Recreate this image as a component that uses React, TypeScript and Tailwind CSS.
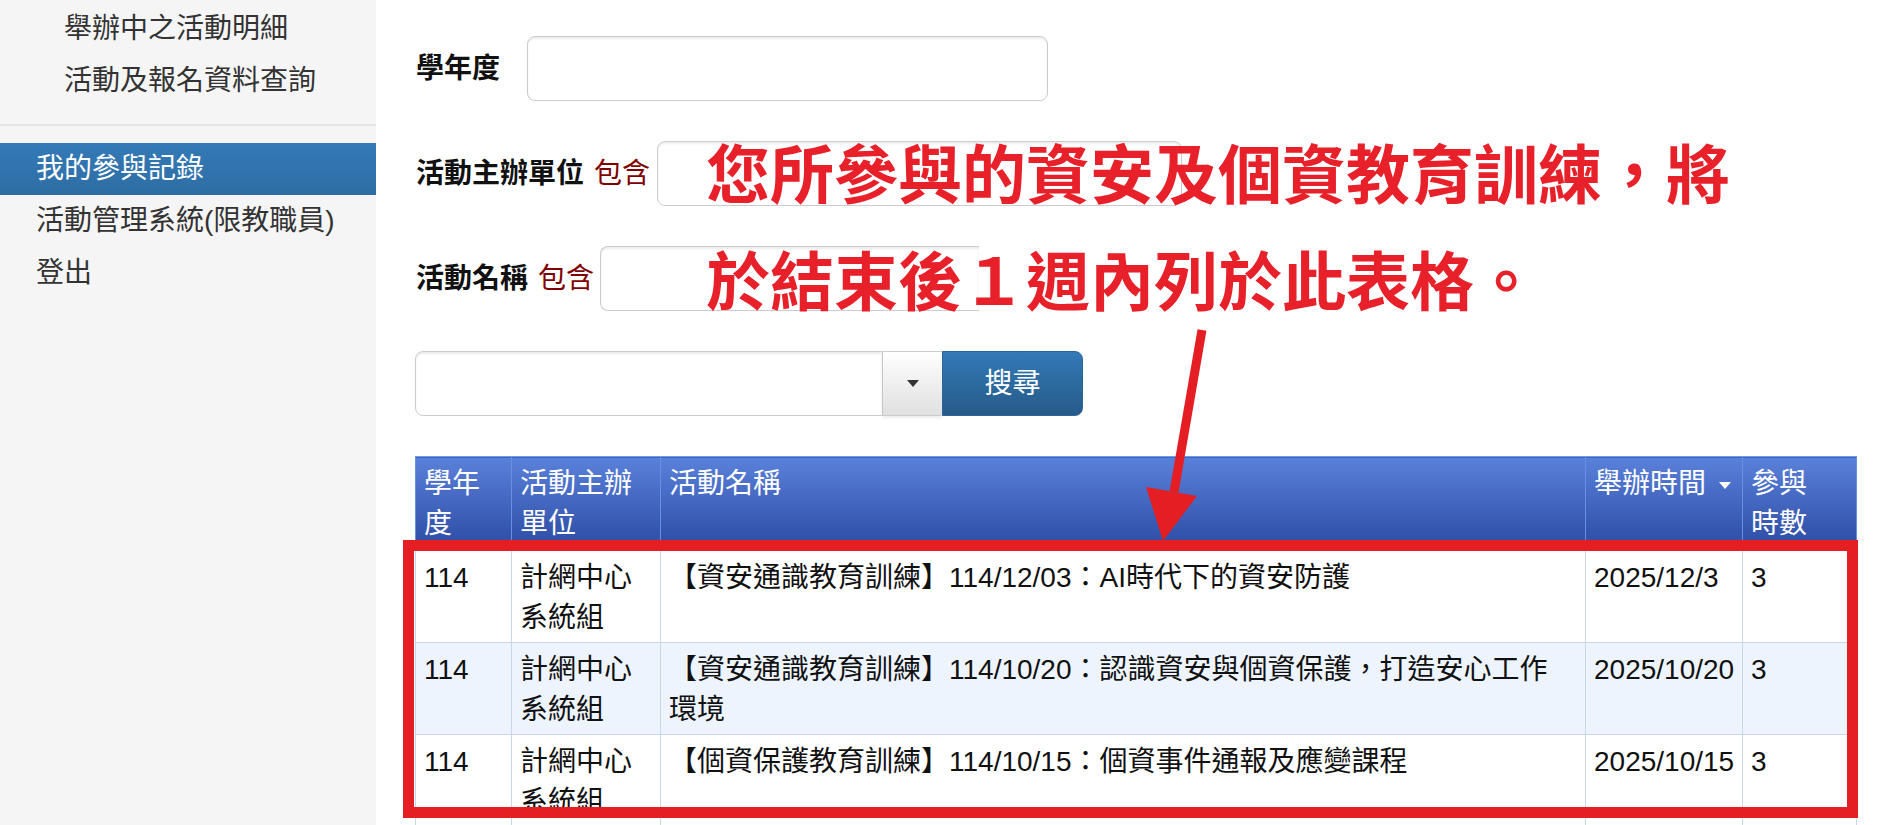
import React from "react";

const rows = [
  {
    year: "114",
    org: ["計網中心", "系統組"],
    name: ["【資安通識教育訓練】114/12/03：AI時代下的資安防護"],
    date: "2025/12/3",
    hours: "3",
    alt: false,
  },
  {
    year: "114",
    org: ["計網中心", "系統組"],
    name: ["【資安通識教育訓練】114/10/20：認識資安與個資保護，打造安心工作", "環境"],
    date: "2025/10/20",
    hours: "3",
    alt: true,
  },
  {
    year: "114",
    org: ["計網中心", "系統組"],
    name: ["【個資保護教育訓練】114/10/15：個資事件通報及應變課程"],
    date: "2025/10/15",
    hours: "3",
    alt: false,
  },
];

function Sidebar() {
  return (
    <aside className="w-[376px] shrink-0 bg-[#f5f5f5] pt-[3px] text-[#333]">
      <ul>
        <li className="py-[6px] pl-[64px]">舉辦中之活動明細</li>
        <li className="py-[6px] pl-[64px]">活動及報名資料查詢</li>
      </ul>
      <div className="my-[17px] h-[2px] bg-[#e5e5e5]" />
      <ul>
        <li className="bg-linear-to-b from-[#337ab7] to-[#2e6da4] py-[6px] pl-[36px] text-white">
          我的參與記錄
        </li>
        <li className="py-[6px] pl-[36px]">活動管理系統(限教職員)</li>
        <li className="py-[6px] pl-[36px]">登出</li>
      </ul>
    </aside>
  );
}

function SearchForm() {
  const inputCls =
    "h-[65px] border border-[#cccccc] bg-white shadow-[inset_0_2px_2px_rgba(0,0,0,0.075)]";
  return (
    <div className="flex flex-col gap-[40px]">
      <div className="flex h-[65px] items-center">
        <span className="w-[112px] pl-[1px] font-bold text-[#111]">學年度</span>
        <div className={`${inputCls} w-[521px] rounded-[8px]`} />
      </div>
      <div className="flex h-[65px] items-center">
        <span className="pl-[1px] font-bold text-[#111]">活動主辦單位</span>
        <span className="ml-[10px] text-[#800000]">包含</span>
        <div className={`${inputCls} ml-[7px] w-[525px] rounded-[8px]`} />
      </div>
      <div className="flex h-[65px] items-center">
        <span className="pl-[1px] font-bold text-[#111]">活動名稱</span>
        <span className="ml-[10px] text-[#800000]">包含</span>
        <div className={`${inputCls} ml-[6px] w-[379px] rounded-l-[8px] border-r-0`} />
      </div>
      <div className="flex h-[65px] items-stretch">
        <div className={`${inputCls} w-[468px] rounded-l-[8px]`} />
        <div className="flex w-[59px] items-center justify-center border-y border-[#cccccc] bg-linear-to-b from-[#ffffff] to-[#e0e0e0] shadow-[0_2px_3px_rgba(0,0,0,0.08)]">
          <span className="h-0 w-0 border-x-[6px] border-t-[7px] border-x-transparent border-t-[#333]" />
        </div>
        <button className="flex w-[141px] items-center justify-center rounded-r-[8px] border border-[#2b669a] bg-linear-to-b from-[#337ab7] to-[#265a88] text-white">
          搜尋
        </button>
      </div>
    </div>
  );
}

function RecordTable() {
  const th =
    "h-[94px] border-x border-t border-x-[#6790e0] border-t-[#6d9eeb] bg-linear-to-b from-[#5a81da] to-[#2c4aa3] px-[8px] pt-[7px] text-left align-top font-normal text-white";
  const td = "h-[92px] border border-[#c7d7ef] px-[8px] pt-[7px] align-top";
  return (
    <table className="mt-[40px] w-[1441px] table-fixed border-collapse text-[#111]">
      <colgroup>
        <col className="w-[96px]" />
        <col className="w-[149px]" />
        <col className="w-[925px]" />
        <col className="w-[157px]" />
        <col className="w-[114px]" />
      </colgroup>
      <thead>
        <tr>
          <th className={th}>
            學年
            <br />度
          </th>
          <th className={th}>
            活動主辦
            <br />
            單位
          </th>
          <th className={th}>活動名稱</th>
          <th className={`${th} whitespace-nowrap`}>
            舉辦時間
            <span className="ml-[13px] inline-block h-0 w-0 border-x-[6px] border-t-[7px] border-x-transparent border-t-white align-middle" />
          </th>
          <th className={th}>
            參與
            <br />
            時數
          </th>
        </tr>
      </thead>
      <tbody>
        {rows.map((r, i) => (
          <tr key={i} className={r.alt ? "bg-[#edf4fd]" : "bg-white"}>
            <td className={td}>{r.year}</td>
            <td className={td}>
              {r.org[0]}
              <br />
              {r.org[1]}
            </td>
            <td className={td}>
              {r.name.map((line, j) => (
                <div key={j} className="whitespace-nowrap">
                  {line}
                </div>
              ))}
            </td>
            <td className={`${td} whitespace-nowrap`}>{r.date}</td>
            <td className={td}>{r.hours}</td>
          </tr>
        ))}
      </tbody>
    </table>
  );
}

export default function App() {
  return (
    <div className="relative flex h-[825px] w-[1892px] overflow-hidden bg-white font-['Liberation_Sans','Noto_Sans_CJK_TC',sans-serif] text-[28px] leading-[40px]">
      <Sidebar />
      <main className="flex-1 pl-[39px] pt-[36px]">
        <SearchForm />
        <RecordTable />
      </main>

      {/* callout note over the form */}
      <div className="pointer-events-none absolute left-[706px] top-[138px] whitespace-nowrap font-['Noto_Sans_CJK_TC',sans-serif] text-[64px] font-bold leading-[64px] text-[#e8202a]">
        您所參與的資安及個資教育訓練，將
      </div>
      <div className="pointer-events-none absolute left-[706px] top-[245px] whitespace-nowrap font-['Noto_Sans_CJK_TC',sans-serif] text-[64px] font-bold leading-[64px] text-[#e8202a]">
        於結束後１週內列於此表格。
      </div>

      {/* arrow pointing at the records */}
      <svg
        className="pointer-events-none absolute left-[1130px] top-[320px]"
        width="90"
        height="230"
        viewBox="0 0 90 230"
      >
        <line x1="72" y1="10" x2="44" y2="172" stroke="#e41e22" strokeWidth="9" />
        <polygon points="16,167 67,176 33,221" fill="#e41e22" />
      </svg>

      {/* highlight frame around the rows */}
      <div className="pointer-events-none absolute left-[403px] top-[540px] h-[278px] w-[1455px] border-[11px] border-[#e41e22]" />
    </div>
  );
}
